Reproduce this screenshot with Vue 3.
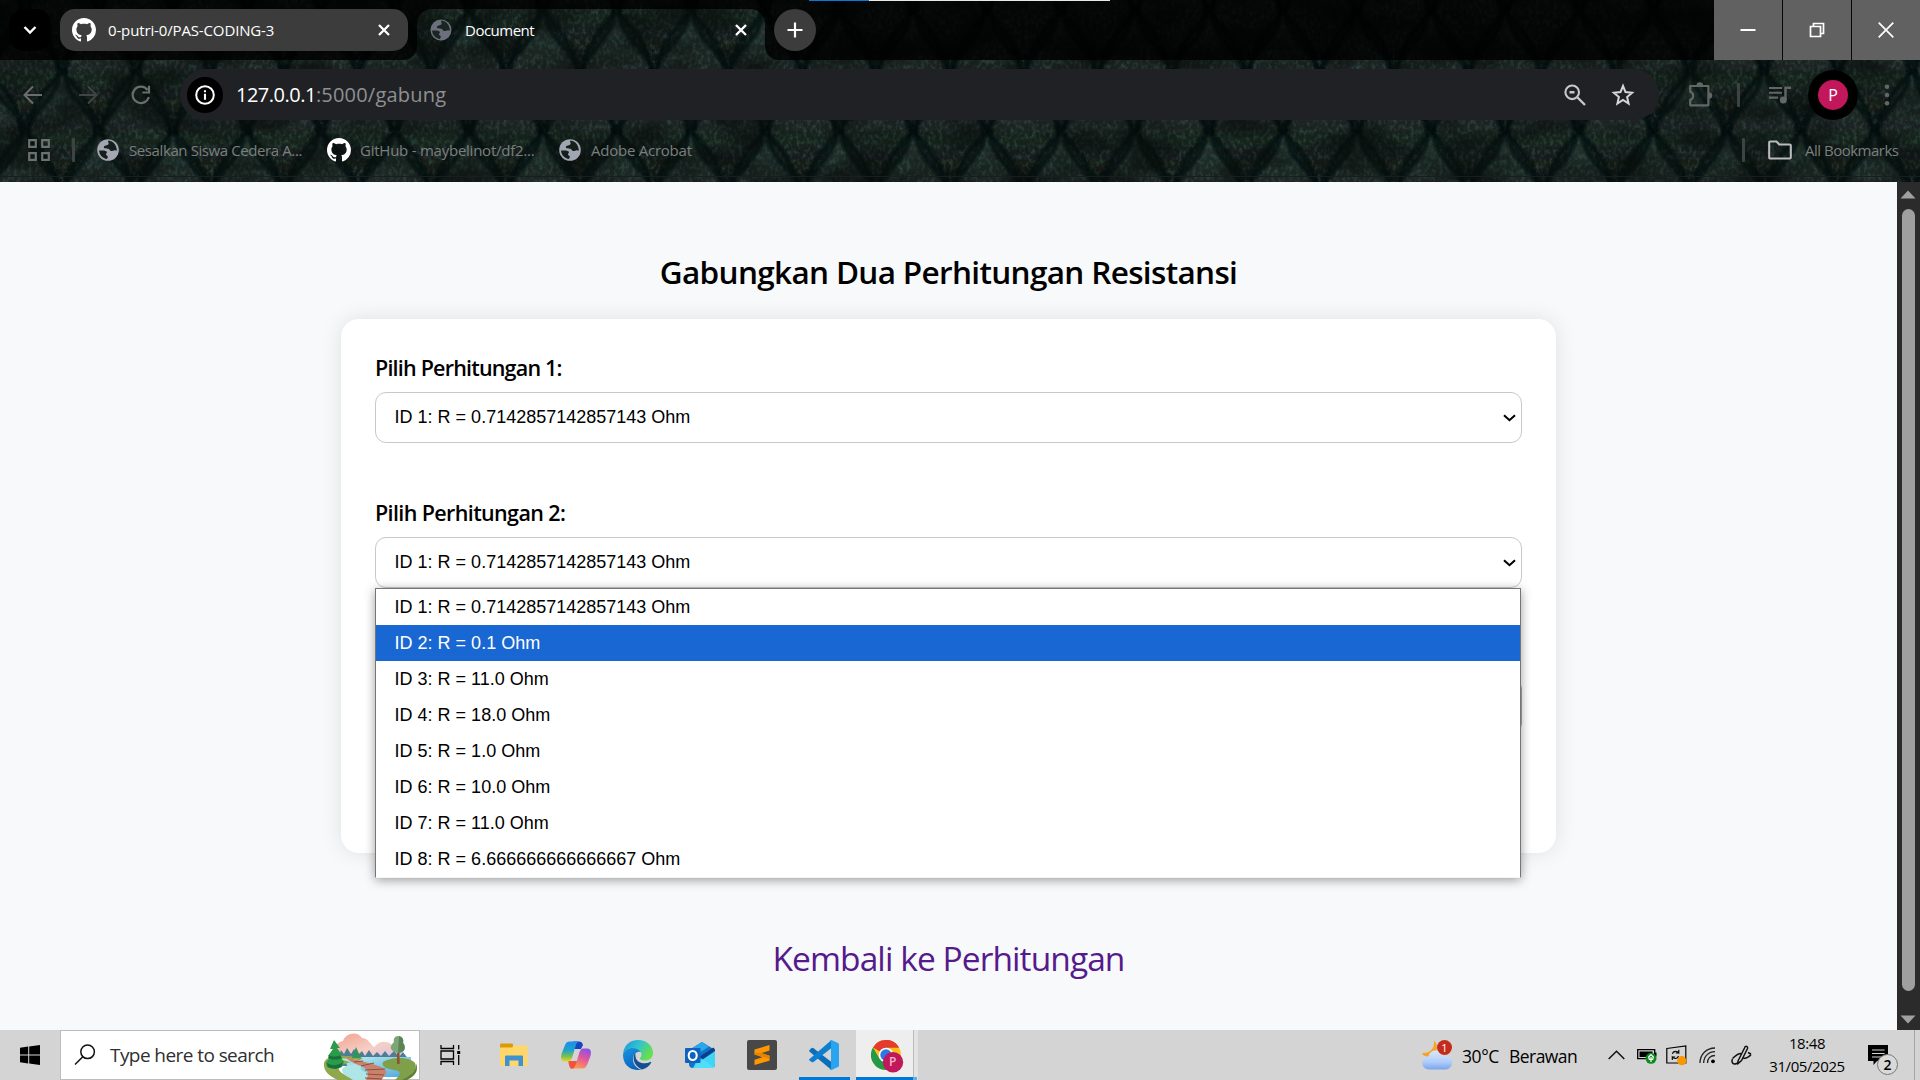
<script setup>
import { ref } from 'vue'

const options = [
  'ID 1: R = 0.7142857142857143 Ohm',
  'ID 2: R = 0.1 Ohm',
  'ID 3: R = 11.0 Ohm',
  'ID 4: R = 18.0 Ohm',
  'ID 5: R = 1.0 Ohm',
  'ID 6: R = 10.0 Ohm',
  'ID 7: R = 11.0 Ohm',
  'ID 8: R = 6.666666666666667 Ohm',
]
const highlighted = ref(1)
const octocat =
  'M8 0C3.58 0 0 3.58 0 8c0 3.54 2.29 6.53 5.47 7.59.4.07.55-.17.55-.38 0-.19-.01-.82-.01-1.49-2.01.37-2.53-.49-2.69-.94-.09-.23-.48-.94-.82-1.13-.28-.15-.68-.52-.01-.53.63-.01 1.08.58 1.23.82.72 1.21 1.87.87 2.33.66.07-.52.28-.87.51-1.07-1.78-.2-3.64-.89-3.64-3.95 0-.87.31-1.59.82-2.15-.08-.2-.36-1.02.08-2.12 0 0 .67-.21 2.2.82.64-.18 1.32-.27 2-.27s1.36.09 2 .27c1.53-1.04 2.2-.82 2.2-.82.44 1.1.16 1.92.08 2.12.51.56.82 1.27.82 2.15 0 3.07-1.87 3.75-3.65 3.95.29.25.54.73.54 1.48 0 1.07-.01 1.93-.01 2.2 0 .21.15.46.55.38A8.01 8.01 0 0 0 16 8c0-4.42-3.58-8-8-8z'
const land =
  'M12.6 2.6C11 4.2 13.6 4.6 12.4 6.3 11.4 7.6 8.3 7.2 7.9 9c-.4 1.7 2.6 1.5 4.4 1.7 1.7.2 1.3 2.3 3 2.4 1.6.1 2.3-1.2 3.9-.9l1.6.5c.2-5.2-3.6-9.5-8.2-10.1zM3.1 12.6c2.5-.3 6.6-.5 7.6 1 .9 1.4-.9 1.6-.7 3 .2 1.300 2 .9 1.800 2.400-.1.8-.8 1.300-.7 2.100C6.700 20.700 3.200 17 3.100 12.600z'
</script>

<template>
  <div class="screen">
    <header class="chrome">
      <svg class="scales" width="1920" height="182">
        <defs>
          <linearGradient id="scaleFill" x1="0" y1="0" x2="0" y2="1">
            <stop offset="0" stop-color="#253631" />
            <stop offset=".3" stop-color="#1d2724" />
            <stop offset=".7" stop-color="#161e1b" />
            <stop offset="1" stop-color="#0d1311" />
          </linearGradient>
          <filter id="soft"><feGaussianBlur stdDeviation="1.2" /></filter>
          <filter id="grain" x="0" y="0" width="100%" height="100%" color-interpolation-filters="sRGB">
            <feTurbulence type="fractalNoise" baseFrequency=".28 .2" numOctaves="3" seed="8" />
            <feColorMatrix values="0 0 0 0 .26  0 0 0 0 .42  0 0 0 0 .37  2.2 0 0 0 -.95" />
          </filter>
          <filter id="glow" x="0" y="0" width="100%" height="100%" color-interpolation-filters="sRGB">
            <feTurbulence type="fractalNoise" baseFrequency=".018 .03" numOctaves="2" seed="21" />
            <feColorMatrix values="0 0 0 0 .03  0 0 0 0 .05  0 0 0 0 .045  3.4 0 0 0 -1.4" />
          </filter>
          <pattern id="scalePattern" x="-12" y="12" width="74" height="120" patternUnits="userSpaceOnUse">
            <rect width="74" height="120" fill="#060a08" />
            <g filter="url(#soft)">
              <path d="M37 2C49 14 69 36 69 61 69 82 47 96 37 118 27 96 5 82 5 61 5 36 25 14 37 2z" fill="url(#scaleFill)" />
              <path d="M0-58C12-46 32-24 32 1 32 22 10 36 0 58-10 36-32 22-32 1-32-24-12-46 0-58z" fill="url(#scaleFill)" />
              <path d="M74-58C86-46 106-24 106 1 106 22 84 36 74 58 64 36 42 22 42 1 42-24 62-46 74-58z" fill="url(#scaleFill)" />
              <path d="M0 62C12 74 32 96 32 121 32 142 10 156 0 178-10 156-32 142-32 121-32 96-12 74 0 62z" fill="url(#scaleFill)" />
              <path d="M74 62C86 74 106 96 106 121 106 142 84 156 74 178 64 156 42 142 42 121 42 96 62 74 74 62z" fill="url(#scaleFill)" />
            </g>
          </pattern>
          <pattern id="seamPattern" x="-12" y="12" width="74" height="120" patternUnits="userSpaceOnUse">
            <g fill="none" stroke="#060a08" stroke-width="5" opacity=".75" filter="url(#soft)">
              <path d="M37 0C49 12 71 36 71 61 71 84 47 96 37 120 27 96 3 84 3 61 3 36 25 12 37 0z" />
              <path d="M0 60C12 72 34 96 34 121M74 60C62 72 40 96 40 121M0 60C10 36 34 24 34 1M74 60C64 36 40 24 40 1" />
            </g>
          </pattern>
        </defs>
        <rect width="1920" height="182" fill="url(#scalePattern)" />
        <rect width="1920" height="182" filter="url(#grain)" opacity=".5" />
        <rect width="1920" height="182" fill="url(#seamPattern)" />
        <rect width="1920" height="182" filter="url(#glow)" opacity=".6" />
      </svg>

      <div class="strip">
        <div class="strip-left">
          <div class="tab-search">
            <svg width="16" height="10" viewBox="0 0 16 10"><path d="M2.500 2 8 7.500 13.500 2" fill="none" stroke="#fff" stroke-width="2.400" /></svg>
          </div>
          <div class="tab-idle">
            <svg class="tab-icon" width="24" height="24" viewBox="0 0 16 16"><path :d="octocat" fill="#fff" /></svg>
            <span class="tab-text t-repo">0-putri-0/PAS-CODING-3</span>
            <svg class="cross" width="12" height="12" viewBox="0 0 12 12"><path d="M1 1 11 11M11 1 1 11" stroke="#fff" stroke-width="2.300" /></svg>
          </div>
        </div>
        <div class="tab-active">
          <div class="tab-shape">
            <svg class="tab-icon" width="24" height="24" viewBox="0 0 24 24"><circle cx="12" cy="12" r="10.500" fill="#6c707c" /><path :d="land" fill="#1b2622" /></svg>
            <span class="tab-text t-doc">Document</span>
            <svg class="cross" width="12" height="12" viewBox="0 0 12 12"><path d="M1 1 11 11M11 1 1 11" stroke="#fff" stroke-width="2.300" /></svg>
          </div>
        </div>
        <div class="strip-right">
          <div class="new-tab">
            <svg width="16" height="16" viewBox="0 0 16 16"><path d="M8 .5v15M.5 8h15" stroke="#fff" stroke-width="2.200" /></svg>
          </div>
          <div class="win-controls">
            <div><svg width="16" height="16" viewBox="0 0 16 16"><path d="M.5 8h15" stroke="#fff" stroke-width="2" /></svg></div>
            <div><svg width="16" height="16" viewBox="0 0 16 16"><path d="M1.500 4.500h10v10h-10zM4.500 4.500v-3h10v10h-3" fill="none" stroke="#fff" stroke-width="1.700" /></svg></div>
            <div><svg width="16" height="16" viewBox="0 0 16 16"><path d="M.7.7 15.300 15.300M15.300.7.7 15.300" stroke="#fff" stroke-width="1.700" /></svg></div>
          </div>
        </div>
      </div>
      <div class="top-marker"><i></i><b></b></div>

      <div class="toolbar">
        <svg class="back" width="20" height="20" viewBox="0 0 20 20"><path d="M19 10H2M10 1.500 1.500 10 10 18.500" fill="none" stroke="#6a6d6b" stroke-width="2" /></svg>
        <svg class="fwd" width="20" height="20" viewBox="0 0 20 20"><path d="M1 10h17M10 1.500 18.500 10 10 18.500" fill="none" stroke="#404543" stroke-width="2" /></svg>
        <svg class="reload" width="20" height="20" viewBox="0 0 20 20"><path d="M16.500 5A8.200 8.200 0 1 0 17.800 12M18 .8V7.500H11.300" fill="none" stroke="#6a6d6b" stroke-width="2.200" /></svg>
        <div class="omnibox">
          <div class="info">
            <svg width="20" height="20" viewBox="0 0 20 20"><circle cx="10" cy="10" r="8.800" fill="none" stroke="#fff" stroke-width="2" /><path d="M10 8.700v6M10 5.200v2.100" stroke="#fff" stroke-width="2.100" /></svg>
          </div>
          <span class="host">127.0.0.1</span><span class="path">:5000/gabung</span>
          <svg class="lens" width="22" height="22" viewBox="0 0 22 22"><path d="M13.500 13.500 21 21M5.500 8.300h5" stroke="#c7c8c9" stroke-width="2.400" /><circle cx="8.200" cy="8.300" r="6.800" fill="none" stroke="#c7c8c9" stroke-width="2.100" /></svg>
          <svg class="star" width="24" height="24" viewBox="0 0 24 24"><path d="M12 3l2.500 6.100 6.600.6-5 4.300 1.500 6.500L12 17l-5.600 3.500L7.900 14l-5-4.300 6.600-.6z" fill="none" stroke="#d5d6d7" stroke-width="2" /></svg>
        </div>
        <svg class="puzzle" width="26" height="26" viewBox="0 0 26 26"><path d="M3.200 4h18.200v19.300H3.200v-5.600c4-1 4-7 0-8z" fill="none" stroke="#626664" stroke-width="2.200" stroke-linejoin="round" /><path d="M9.500 3.500a3.300 3.300 0 0 1 6.600 0zM22 10.300a3.300 3.300 0 0 1 0 6.600z" fill="#626664" /></svg>
        <i class="rule r1"></i>
        <svg class="music" width="24" height="20" viewBox="0 0 24 20"><path d="M1 3h13M1 7.800h13M1 12.600h9" stroke="#626664" stroke-width="2.100" /><path d="M17.500 15V2.700H23" fill="none" stroke="#626664" stroke-width="2.400" /><circle cx="15.300" cy="15" r="3.500" fill="#626664" /></svg>
        <div class="avatar"><span>P</span></div>
        <svg class="more" width="6" height="22" viewBox="0 0 6 22"><g fill="#626664"><circle cx="3" cy="2.800" r="2.300" /><circle cx="3" cy="11" r="2.300" /><circle cx="3" cy="19.200" r="2.300" /></g></svg>
      </div>

      <div class="bookmarks">
        <svg class="apps" width="22" height="22" viewBox="0 0 22 22"><path d="M1.200 1.200h6.600v6.600H1.200zM14.200 1.200h6.600v6.600h-6.600zM1.200 14.200h6.600v6.600H1.200zM14.200 14.200h6.600v6.600h-6.600z" fill="none" stroke="#6c706e" stroke-width="2.200" /></svg>
        <i class="rule r2"></i>
        <svg class="b1" width="24" height="24" viewBox="0 0 24 24"><circle cx="12" cy="12" r="10.800" fill="#a2a6b1" /><path :d="land" fill="#171f1d" /></svg>
        <span class="bm t1">Sesalkan Siswa Cedera A...</span>
        <svg width="24" height="24" viewBox="0 0 16 16"><path :d="octocat" fill="#fff" /></svg>
        <span class="bm t2">GitHub - maybelinot/df2...</span>
        <svg width="24" height="24" viewBox="0 0 24 24"><circle cx="12" cy="12" r="10.800" fill="#a2a6b1" /><path :d="land" fill="#171f1d" /></svg>
        <span class="bm t3">Adobe Acrobat</span>
        <i class="rule r3"></i>
        <svg class="folder" width="24" height="20" viewBox="0 0 24 20"><path d="M1.200 17.500V2.500a1 1 0 0 1 1-1h6.300l2.700 3h10.600a1 1 0 0 1 1 1v12a1 1 0 0 1-1 1H2.200a1 1 0 0 1-1-1z" fill="none" stroke="#b9bbba" stroke-width="2.100" /></svg>
        <span class="bm t4">All Bookmarks</span>
      </div>
    </header>

    <div class="viewport">
      <main class="page">
        <h1>Gabungkan Dua Perhitungan Resistansi</h1>
        <form class="card">
          <label class="l1">Pilih Perhitungan 1:</label>
          <div class="select">
            <span>{{ options[0] }}</span>
            <svg width="13" height="8" viewBox="0 0 13 8"><path d="M1 1.200 6.500 6.200 12 1.200" fill="none" stroke="#000" stroke-width="2.100" /></svg>
          </div>
          <label class="l2">Pilih Perhitungan 2:</label>
          <div class="select">
            <span>{{ options[0] }}</span>
            <svg width="13" height="8" viewBox="0 0 13 8"><path d="M1 1.200 6.500 6.200 12 1.200" fill="none" stroke="#000" stroke-width="2.100" /></svg>
            <ul class="menu">
              <li v-for="(o, i) in options" :key="o" :class="{ on: i === highlighted }">{{ o }}</li>
            </ul>
          </div>
          <div class="submit"></div>
        </form>
        <a class="back-link">Kembali ke Perhitungan</a>
      </main>
      <div class="scrollbar">
        <svg width="16" height="9" viewBox="0 0 16 9"><path d="M.5 8.500 8 .5l7.500 8z" fill="#a0a0a0" /></svg>
        <div class="thumb"></div>
        <svg width="16" height="9" viewBox="0 0 16 9"><path d="M.5.5 8 8.500 15.500.5z" fill="#a0a0a0" /></svg>
      </div>
    </div>

    <footer class="taskbar">
      <div class="start">
        <svg width="20" height="20" viewBox="0 0 20 20"><path d="M0 2.800 8.200 1.600V9.500H0zM9.200 1.500 20 0v9.500H9.200zM0 10.500h8.200v7.900L0 17.200zM9.200 10.500H20V20L9.200 18.500z" /></svg>
      </div>
      <div class="search">
        <svg class="mag" width="22" height="22" viewBox="0 0 22 22"><circle cx="13.600" cy="7.800" r="6.800" fill="none" stroke="#111" stroke-width="1.500" /><path d="M8.800 12.800 1 20.500" stroke="#111" stroke-width="1.500" /></svg>
        <span>Type here to search</span>
        <svg class="scene" width="94" height="47" viewBox="0 0 94 47">
          <defs>
            <linearGradient id="cloudFill" x1="0" y1="0" x2="1" y2="1"><stop offset="0" stop-color="#f2a08a" /><stop offset=".55" stop-color="#f6cfc6" /><stop offset="1" stop-color="#d3bfe4" /></linearGradient>
            <linearGradient id="waterFill" x1="0" y1="0" x2="1" y2="1"><stop offset="0" stop-color="#bdf0ee" /><stop offset="1" stop-color="#4fa5dc" /></linearGradient>
          </defs>
          <path d="M10 25C8 16 14 9 20 8 22 1 34-3 39 5c6 0 8 6 12 9 5-6 13-7 18-2 6 0 12 5 11 14z" fill="url(#cloudFill)" />
          <path d="M15 26l3-9 3 4 3-6 4 6 3-5 4 6 4-4 3 5 4-6 4 6 4-4 4 4 4-5 4 5 5-5 5 6 4-5 6 8v6H13z" fill="#4c7f97" />
          <path d="M20 24h68v20H30z" fill="url(#waterFill)" />
          <path d="M1 30C4 21 22 22 40 25c-4 4-18 4-23 8-5 6 8 10 16 14H15C6 43 0 38 1 30z" fill="#8fa84b" />
          <path d="M17 26c8-1 16 0 22 2-5 4-15 3-19 7-4 5 6 9 10 12h18c3-8-16-9-9-14z" fill="#aee6e8" />
          <path d="M60 29c8-5 26-6 32 1 3 6-2 11-12 17h-8c6-6 7-9-1-10-7-1-13-3-11-8z" fill="#7fa048" />
          <path d="M79 47c10-5 15-10 14-17 3 8-1 13-9 17z" fill="#5e7f33" />
          <path d="M23 24c12 4 38 8 40 14 1 4-4 6-4 9H43c4-7 2-11-5-14-7-3-13-5-15-9z" fill="#c9836b" />
          <path d="M31 29l9-1M38 33l13-3M42 37l20-1M43 41l18 1M42 45l17 1" stroke="#8d4f43" stroke-width="1" />
          <path d="M10.500 30h3v6h-3zM74 18h2.600v13H74z" fill="#8b5433" />
          <path d="M11 7l6 8h-3l5 7h-3l5 7-2 5c-5 2-10 2-15 0l-1-4 5-7H5l5-7H7z" fill="#2a9a4b" />
          <path d="M4 30c4 3 11 3 16-1l-2 5c-5 2-9 2-13 0zM6 22c3 2 8 2 11 0l2 3c-4 2-9 2-14 0z" fill="#17713a" />
          <path d="M33 14l5 11h-9z" fill="#35945a" />
          <path d="M75 3c4 0 6 4 5 7 3 3 2 8-1 9-3 2-9 1-10-2-3-3 0-6 2-8-1-3 1-6 4-6z" fill="#7da576" />
          <path d="M76 3c4 1 5 4 4 7 3 3 2 8-1 9l-4 1z" fill="#5a8558" />
        </svg>
      </div>
      <div class="app task-view">
        <svg width="21" height="20" viewBox="0 0 21 20"><path d="M1 0v3.500h12.500V0M1 20v-3.500h12.500V20M1 6h12.500v8H1zM18.700 0v4.500M18.700 10v10" fill="none" stroke="#000" stroke-width="1.300" /><path d="M17.200 6h3v3h-3z" /></svg>
      </div>
      <div class="app">
        <svg width="28" height="24" viewBox="0 0 28 24"><path d="M0 1.500Q0 .5 1 .5h11q1 0 1 1V6H0z" fill="#dc9a08" /><path d="M0 4.500h12l2-2h12.500q1 0 1 1V22q0 1-1 1H1q-1 0-1-1z" fill="#ffd768" /><path d="M5 23V13.500q0-1 1-1h16q1 0 1 1V23h-4.500v-5.500h-9V23z" fill="#3f92d2" /></svg>
      </div>
      <div class="app">
        <svg width="30" height="28" viewBox="0 0 30 28">
          <defs>
            <linearGradient id="copA" x1="0" y1="0" x2="0" y2="1"><stop offset="0" stop-color="#1b8ef2" /><stop offset=".45" stop-color="#1fa5c6" /><stop offset=".75" stop-color="#7fc04a" /><stop offset="1" stop-color="#e8d534" /></linearGradient>
            <linearGradient id="copB" x1=".7" y1="0" x2=".3" y2="1"><stop offset="0" stop-color="#8a51e6" /><stop offset=".45" stop-color="#e0559f" /><stop offset="1" stop-color="#fb9a51" /></linearGradient>
          </defs>
          <path d="M13 8h7l2-4C21 1 20 .5 17 .5h-5z" fill="#1446c4" />
          <path d="M9 20h8l-2 5c-1 2.500-3 3-5 2.500C8 26.500 8 22 7 20z" fill="#f4533c" />
          <path d="M9 .5h8.500c-2 1-2.500 3-3.200 5.500L11 17c-1 2.500-2 3.500-4 3.500H4C0 20.500-.5 17 .5 13L4 4C5 1.500 6.500.5 9 .5z" fill="url(#copA)" />
          <path d="M21 27.500h-9c2-1 2.500-3 3.200-5.500L18.500 11c1-2.500 2-3.500 4-3.500H26c4 0 4.500 3.500 3.500 7.500L26 24c-1 2.500-2.500 3.500-5 3.500z" fill="url(#copB)" />
        </svg>
      </div>
      <div class="app">
        <svg width="30" height="30" viewBox="0 0 30 30">
          <defs>
            <linearGradient id="edgeA" x1="0" y1="0" x2="1" y2=".5"><stop offset="0" stop-color="#1b92dc" /><stop offset=".5" stop-color="#2fc3d0" /><stop offset="1" stop-color="#66e04d" /></linearGradient>
            <linearGradient id="edgeB" x1="0" y1="0" x2=".5" y2="1"><stop offset="0" stop-color="#1796e0" /><stop offset="1" stop-color="#0a63bd" /></linearGradient>
          </defs>
          <path d="M0 14C1 5 7 0 15 0c9 0 15 6 15 13 0 5-4 7.500-8 7.500-3 0-5-1-5-2 0-1 1.500-1.500 1.500-4C18.500 11 14 8 9.500 8 5 8 1 10.500 0 14z" fill="url(#edgeA)" />
          <path d="M0 15C.5 10 5 8 9.500 8c4 0 7 2 8.500 4-3-1-8 1-8 7 0 6 4 10 9 10.500C8 32 0 25 0 15z" fill="url(#edgeB)" />
          <path d="M12.500 12.800C9 16 10 26 19 29.500c4-.7 7.500-3.500 9.200-7 .2-.6-.2-.9-.7-.6-6 3-13 1-14.700-4-.5-2-.5-4-.3-5.100z" fill="#144f91" />
        </svg>
      </div>
      <div class="app">
        <svg width="30" height="26" viewBox="0 0 30 26"><path d="M4 8 17 0l13 8v14q0 4-4 4H8q-4 0-4-4z" fill="#1272c4" /><path d="M5 7.500 17 0l7 4.500-12 8z" fill="#28a8ea" /><path d="M12 18 30 8v14q0 4-4 4H8z" fill="#40d4f6" /><path d="M14 15 28.500 5.500Q30 6.500 30 9L17 18z" fill="#0a3f8f" /><path d="M16 16 30 26H9z" fill="#5be4ff" opacity=".6" /><rect y="6" width="15.500" height="15" rx="1" fill="#0f62bd" /><ellipse cx="7.700" cy="13.500" rx="4" ry="4.500" fill="none" stroke="#fff" stroke-width="2.100" /></svg>
      </div>
      <div class="app">
        <svg width="30" height="30" viewBox="0 0 30 30"><rect width="30" height="30" rx="2" fill="#484848" /><path d="M7.500 9.500 22.500 5v5.500l-8.200 2.600 8.200 2.600v5L7.500 25v-5.300l8-2.500-8-2.600z" fill="#ff9800" /><path d="M14.300 13.100l8.200 2.600v3l-15-4.500v-1.500z" fill="#e58200" /></svg>
      </div>
      <div class="app running">
        <svg width="30" height="30" viewBox="0 0 30 30"><path d="M0 10.500 2.500 8.200q1-.7 2 0L22.500 22v8L.7 11.700z" fill="#0a6fb8" /><path d="M0 19.500 22.500 0v8L4.500 22q-1 .6-2 0L0 20z" fill="#0c7fd0" /><path d="M22.500 0 29 3q1 .5 1 1.500v21q0 1-1 1.500l-6.500 3q-1.500 0-2-1 1.500.3 1.500-1.500V2.500q0-1.700-1.500-1.500z" fill="#27a5f1" /></svg>
      </div>
      <div class="app current">
        <svg width="33" height="33" viewBox="0 0 33 33"><circle cx="15" cy="15" r="15" fill="#fbc116" /><path d="M15 15 2 7.500A15 15 0 0 1 28 7.500H15z" fill="#e33b2e" /><path d="M2 7.500A15 15 0 0 0 15 30l6.500-11.200L15 15 8.500 18.800z" fill="#229a47" /><path d="M15 0A15 15 0 0 1 28 7.500H15z" fill="#e33b2e" /><circle cx="15" cy="15" r="7.300" fill="#fff" /><circle cx="15" cy="15" r="5.700" fill="#2b79e8" /><circle cx="22" cy="22.300" r="10.200" fill="#c1185b" /></svg>
        <span class="profile">P</span>
      </div>

      <div class="weather">
        <svg width="31" height="30" viewBox="0 0 31 30">
          <defs><linearGradient id="cloudBlue" x1="0" y1="0" x2="0" y2="1"><stop offset="0" stop-color="#d8e8fc" /><stop offset=".6" stop-color="#b0cdf8" /><stop offset="1" stop-color="#79a4ee" /></linearGradient></defs>
          <path d="M12 .5c5 5 4 14-5 16C3 17 1 15.500 0 13 8 14 13 8 12 .5z" fill="#f7a325" />
          <path d="M7 29.500a6.500 6.500 0 0 1-.5-13C8 9 19 8.500 21.500 16c5-1.500 9 2 8.500 6.500 0 4-3 7-6 7z" fill="url(#cloudBlue)" />
        </svg>
        <b class="alert">1</b>
      </div>
      <span class="temp">30°C</span>
      <span class="sky">Berawan</span>
      <svg class="chev" width="17" height="10" viewBox="0 0 17 10"><path d="M.7 9 8.500 1.200 16.300 9" fill="none" stroke="#111" stroke-width="1.500" /></svg>
      <svg class="battery" width="21" height="18" viewBox="0 0 21 18"><path d="M.7 3.700h17v9H.7z" fill="none" stroke="#000" stroke-width="1.300" /><path d="M2.500 5.500h13v5.500h-13zM18 6.500h1.500v4H18z" /><circle cx="14" cy="12.300" r="5.500" fill="#0c8a1c" /><path d="M14 8.700 16.300 11l-.6 2.300H12.300L11.700 11z" fill="none" stroke="#fff" stroke-width="1.200" /><path d="M14 11v5" stroke="#fff" stroke-width="1.200" /></svg>
      <svg class="update" width="21" height="21" viewBox="0 0 21 21"><path d="M.8 3.500 19.800 1v17L.8 17.800z" fill="none" stroke="#000" stroke-width="1.200" /><path d="M6.300 8.800c1-3 4.500-3.200 6.500-1V4.800M12.800 7.900H9.800M12.500 11c-1 3-4.200 3.300-6.200 1V15M6.300 12h2.900" fill="none" stroke="#000" stroke-width="1.100" /><circle cx="15.800" cy="15.700" r="4.600" fill="#fb9600" /></svg>
      <svg class="wifi" width="17" height="17" viewBox="0 0 17 17"><path d="M1 16C1 7.500 7.500 1 16 1M4.700 16C4.700 9.500 9.500 4.700 16 4.700M8.500 16C8.500 11.500 11.500 8.500 16 8.500" fill="none" stroke="#222" stroke-width="1.300" /><circle cx="14" cy="14.300" r="1.900" /></svg>
      <svg class="pen" width="21" height="21" viewBox="0 0 21 21"><path d="M7 16 13.500 3c.8-2.500 3.500-2 3 .5L10.500 15.500 7 18.500zM10 8.500C7 8.500 4 11 1.500 13.500M12.500 13.500C16 13 18 12.500 20 9.500M1.500 14c-1.500 3 .5 6 4 4.500l2-1M17 7.500l3 1.500" fill="none" stroke="#111" stroke-width="1.500" /></svg>
      <div class="clock"><span class="time">18:48</span><span class="date">31/05/2025</span></div>
      <div class="notices">
        <svg width="20" height="20" viewBox="0 0 20 20"><path d="M0 0h20v16H9l-3.500 4V16H0z" /><path d="M4 5h12.500M4 8.500h12.500M4 12h9" stroke="#d4d4d4" stroke-width="1.100" /></svg>
        <b>2</b>
      </div>
      <i class="peek"></i>
    </footer>
  </div>
</template>

<style>
body { overflow: hidden; }
</style>

<style scoped>
.screen { width: 1920px; height: 1080px; display: flex; flex-direction: column; overflow: hidden; font-family: "Open Sans", "Noto Sans", sans-serif; color: #000; }
.screen span, .screen label, .screen h1, .screen li { white-space: nowrap; }
svg { display: block; flex: none; }

.chrome { position: relative; height: 182px; flex: none; display: flex; flex-direction: column; background: #111816; }
.scales { position: absolute; left: 0; top: 0; }
.strip, .toolbar, .bookmarks { position: relative; display: flex; }
.strip { height: 60px; flex: none; }
.strip-left { width: 417px; box-sizing: border-box; display: flex; padding: 9px 0 0 9px; background: rgba(0, 0, 0, .8); border-radius: 0 0 14px 0; }
.tab-search { width: 42px; height: 42px; border-radius: 15px; background: #000; display: flex; align-items: center; justify-content: center; }
.tab-idle { width: 348px; height: 42px; margin-left: 9px; border-radius: 15px; background: #3c3c3c; display: flex; align-items: center; }
.tab-icon { margin-left: 12px; }
.tab-text { font-size: 15px; line-height: 42px; margin-left: 12px; color: #fff; flex: 1; }
.t-repo { letter-spacing: -.14px; }
.t-doc { letter-spacing: -.5px; }
.cross { margin-right: 18px; }
.tab-active { width: 348px; height: 60px; overflow: hidden; }
.tab-shape { width: 348px; height: 42px; margin-top: 9px; display: flex; align-items: center; border-radius: 15px 15px 0 0; padding-bottom: 9px; box-shadow: 0 -10px 0 10px rgba(0, 0, 0, .8); clip-path: inset(-9px 0 0 0); }
.strip-right { flex: 1; display: flex; background: rgba(0, 0, 0, .8); border-radius: 0 0 0 14px; }
.new-tab { width: 42px; height: 42px; margin: 9px 0 0 9px; border-radius: 50%; background: #3c3c3c; display: flex; align-items: center; justify-content: center; }
.win-controls { margin-left: auto; display: flex; gap: 1px; background: #050505; }
.win-controls div { width: 68px; height: 60px; background: #616161; display: flex; align-items: center; justify-content: center; }
.top-marker { position: absolute; left: 809px; top: 0; display: flex; height: 1px; }
.top-marker i { width: 60px; background: #0a78d6; }
.top-marker b { width: 241px; background: #e8e8e8; }

.toolbar { height: 69px; flex: none; align-items: center; }
.back { margin-left: 23px; }
.fwd { margin-left: 35px; }
.reload { margin-left: 33px; }
.omnibox { width: 1479px; height: 51px; margin-left: 29px; border-radius: 26px; background: #202124; display: flex; align-items: center; }
.info { width: 36px; height: 36px; margin-left: 7px; border-radius: 50%; background: #000; display: flex; align-items: center; justify-content: center; }
.host, .path { font-size: 20px; line-height: 50px; }
.host { margin-left: 13px; letter-spacing: -.5px; color: #fff; }
.path { color: #8f9092; letter-spacing: .2px; }
.lens { margin-left: auto; }
.star { margin: 0 24px 0 25px; }
.puzzle { margin-left: 28px; }
.rule { width: 3px; height: 24px; border-radius: 1px; background: #3c4341; }
.r1 { margin-left: 24px; }
.music { margin-left: 28px; }
.avatar { width: 50px; height: 50px; margin-left: 16px; border-radius: 50%; background: #000; display: flex; align-items: center; justify-content: center; }
.avatar span { width: 30px; height: 30px; border-radius: 50%; background: #c2185b; color: #fff; font-size: 16px; line-height: 30px; text-align: center; }
.more { margin-left: 26px; }

.bookmarks { height: 52px; margin-top: -5px; flex: none; align-items: center; border-bottom: 1px solid #191d1d; }
.bm { font-size: 15px; line-height: 40px; color: #7a807e; }
.apps { margin-left: 28px; }
.r2 { margin-left: 22px; }
.b1 { margin-left: 21px; }
.t1 { width: 198px; margin-left: 9px; letter-spacing: -.4px; }
.t2 { width: 198px; margin-left: 9px; letter-spacing: -.24px; }
.t3 { margin-left: 9px; letter-spacing: -.24px; }
.r3 { margin-left: auto; }
.folder { margin-left: 23px; }
.t4 { width: 94px; margin: 0 21px 0 13px; letter-spacing: -.5px; }

.viewport { flex: 1; display: flex; background: #f8f9fb; }
.page { width: 1897px; display: flex; flex-direction: column; align-items: center; padding-top: 68px; height: 848px; box-sizing: border-box; }
h1 { margin: 0 0 25px; font-size: 31.5px; line-height: 44px; font-weight: 600; letter-spacing: -.66px; }
.card { width: 1215px; height: 534px; flex: none; box-sizing: border-box; padding: 34px; border-radius: 18px; background: #fff; box-shadow: 0 0 22px rgba(0, 0, 0, .1); display: flex; flex-direction: column; }
label { font-size: 21.5px; line-height: 30px; font-weight: 600; }
.l1 { margin-bottom: 9px; letter-spacing: -.8px; }
.l2 { margin: 55px 0 9px; letter-spacing: -.62px; }
.select { position: relative; height: 51px; flex: none; box-sizing: border-box; border: 1px solid #c9c9c9; border-radius: 11px; display: flex; align-items: center; justify-content: space-between; padding: 0 5px 0 18.6px; font: 18px "Liberation Sans", Arial, sans-serif; }
.menu { position: absolute; left: -1px; top: 50px; width: 1146px; height: 290px; box-sizing: border-box; margin: 0; padding: 0; list-style: none; background: #fff; border: 1px solid #767676; border-bottom-color: #f4f4f4; box-shadow: 0 2px 10px rgba(0, 0, 0, .38); }
.menu li { height: 36px; line-height: 36px; padding-left: 18.6px; }
.menu .on { background: #1967d2; color: #fff; }
.submit { height: 54px; margin-top: 91px; border-radius: 10px; background: #a9a9a9; }
.back-link { margin-top: 81px; font-size: 33.5px; line-height: 48px; letter-spacing: -.92px; color: #551a8b; }
.scrollbar { width: 23px; box-sizing: border-box; padding: 8px 1px 6px 0; background: #2b2b2b; display: flex; flex-direction: column; align-items: center; }
.thumb { width: 13px; height: 782px; margin: 10px 0 auto; border-radius: 7px; background: #9f9f9f; }

.taskbar { height: 50px; flex: none; display: flex; align-items: center; background: #d4d4d4; }
.start { width: 60px; display: flex; justify-content: center; }
.search { width: 360px; height: 50px; box-sizing: border-box; border: 1px solid #bdbdbd; background: #fff; display: flex; align-items: center; }
.mag { margin-left: 13px; }
.search span { width: 213px; margin-left: 14px; font-size: 19px; letter-spacing: -.57px; color: #2f2f2f; }
.scene { margin-top: 2px; }
.app { position: relative; width: 62px; height: 50px; display: flex; align-items: center; justify-content: center; }
.task-view { width: 60px; margin-right: 3px; }
.running::after { content: ""; position: absolute; left: 6px; bottom: 0; width: 51px; height: 3px; background: #0078d7; }
.current { width: 57px; margin-left: 1px; background: #eee; border-right: 1px solid #bbb; box-shadow: 4px 0 0 #e3e3e3; }
.current svg { margin: 3px 0 0 5px; }
.current::after { content: ""; position: absolute; left: 0; bottom: 0; width: 61px; height: 3px; background: linear-gradient(90deg, #0078d7 57px, #62aeea 57px); }
.profile { position: absolute; left: 33px; top: 23px; font-size: 12px; line-height: 18px; font-weight: 600; color: #f3b5cd; }
.weather { position: relative; margin-left: 508px; }
.alert { position: absolute; left: 15px; top: 0; width: 15px; height: 15px; border-radius: 50%; background: #c42b1c; color: #fff; font-size: 11px; line-height: 15px; font-weight: 400; text-align: center; }
.temp, .sky { font-size: 17.5px; letter-spacing: -.4px; padding-top: 1px; }
.temp { width: 47px; margin-left: 9px; }
.sky { width: 68px; letter-spacing: -.55px; }
.chev { margin-left: 31px; }
.battery { margin-left: 12px; }
.update { margin-left: 8px; }
.wifi { margin-left: 12px; }
.pen { margin-left: 15px; }
.clock { width: 80px; margin-left: 15px; display: flex; flex-direction: column; align-items: center; font-size: 15px; line-height: 23px; letter-spacing: -.42px; }
.notices { position: relative; margin-left: 21px; }
.notices b { position: absolute; left: 9px; top: 9px; width: 19px; height: 19px; border: 1px solid #777; border-radius: 50%; background: #d9d9d9; font-size: 14px; line-height: 19px; font-weight: 600; text-align: center; }
.peek { width: 1px; height: 50px; margin: 0 5px 0 auto; background: #a5a5a5; }
</style>
